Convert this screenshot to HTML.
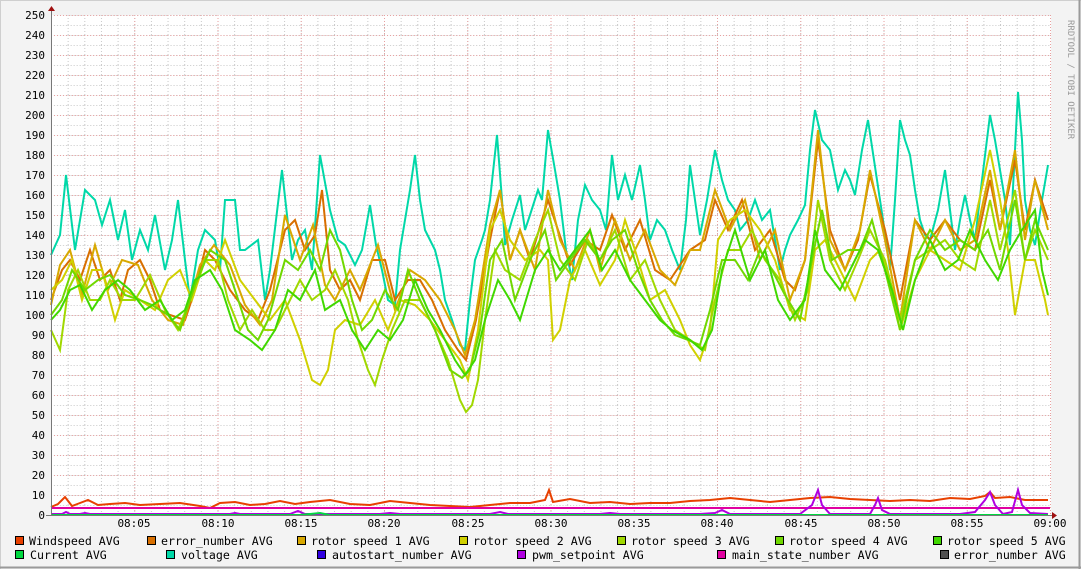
<!DOCTYPE html>
<html><head><meta charset="utf-8"><style>
html,body{margin:0;padding:0;background:#f3f3f3}
svg{display:block}
text{font-family:"DejaVu Sans Mono","Liberation Mono",monospace;font-size:11px;fill:#000}
.lg text{font-size:11.6px}
</style></head><body>
<svg width="1081" height="569" viewBox="0 0 1081 569" xmlns="http://www.w3.org/2000/svg">
<defs>
<pattern id="minor" x="51" y="15" width="16.65" height="10" patternUnits="userSpaceOnUse">
<line x1="0.5" y1="0" x2="0.5" y2="10" stroke="#c8c8c8" stroke-width="1" stroke-dasharray="1,2"/>
<line x1="0" y1="0.5" x2="16.65" y2="0.5" stroke="#c8c8c8" stroke-width="1" stroke-dasharray="1,2"/>
</pattern>
<pattern id="major" x="51" y="15" width="83.25" height="20" patternUnits="userSpaceOnUse">
<line x1="0.5" y1="0" x2="0.5" y2="20" stroke="#e8a0a0" stroke-width="1" stroke-dasharray="1,2"/>
<line x1="0" y1="0.5" x2="83.25" y2="0.5" stroke="#e8a0a0" stroke-width="1" stroke-dasharray="1,2"/>
</pattern>
</defs>
<rect x="0" y="0" width="1081" height="569" fill="#f3f3f3"/>
<line x1="0" y1="0.5" x2="1081" y2="0.5" stroke="#cfcfcf"/>
<line x1="0.5" y1="0" x2="0.5" y2="569" stroke="#cfcfcf"/>
<line x1="0" y1="567.5" x2="1081" y2="567.5" stroke="#9a9a9a" stroke-width="2"/>
<line x1="1079.5" y1="0" x2="1079.5" y2="569" stroke="#9a9a9a" stroke-width="2"/>
<rect x="51" y="15" width="1000" height="500" fill="#fff"/>
<rect x="52" y="15" width="998" height="500" fill="url(#minor)"/>
<rect x="52" y="15" width="999" height="500" fill="url(#major)"/>
<g text-anchor="end">
<text x="45" y="19">250</text><text x="45" y="39">240</text><text x="45" y="59">230</text><text x="45" y="79">220</text><text x="45" y="99">210</text><text x="45" y="119">200</text><text x="45" y="139">190</text><text x="45" y="159">180</text><text x="45" y="179">170</text><text x="45" y="199">160</text><text x="45" y="219">150</text><text x="45" y="239">140</text><text x="45" y="259">130</text><text x="45" y="279">120</text><text x="45" y="299">110</text><text x="45" y="319">100</text><text x="45" y="339">90</text><text x="45" y="359">80</text><text x="45" y="379">70</text><text x="45" y="399">60</text><text x="45" y="419">50</text><text x="45" y="439">40</text><text x="45" y="459">30</text><text x="45" y="479">20</text><text x="45" y="499">10</text><text x="45" y="519">0</text>
</g>
<g text-anchor="middle">
<text x="134" y="527">08:05</text><text x="218" y="527">08:10</text><text x="301" y="527">08:15</text><text x="384" y="527">08:20</text><text x="468" y="527">08:25</text><text x="551" y="527">08:30</text><text x="634" y="527">08:35</text><text x="717" y="527">08:40</text><text x="801" y="527">08:45</text><text x="884" y="527">08:50</text><text x="967" y="527">08:55</text><text x="1050" y="527">09:00</text>
</g>
<text transform="translate(1068,20) rotate(90)" style="font-size:9px;fill:#999">RRDTOOL / TOBI OETIKER</text>
<g fill="none" stroke-width="2" stroke-linejoin="miter">
<polyline stroke="#00d8a8" points="51,255 60,235 66,175 75,250 85,190 95,200 102,225 110,200 118,240 125,210 132,260 140,230 148,250 155,215 165,270 172,240 178,200 185,260 190,300 198,250 205,230 215,240 220,270 225,200 235,200 240,250 245,250 258,240 265,300 270,270 282,170 292,260 298,240 305,230 312,270 320,155 330,210 338,240 345,245 355,265 362,250 370,205 376,245 382,270 388,300 395,305 400,250 405,220 410,190 415,155 420,200 425,230 435,250 440,270 445,300 452,320 460,345 465,350 470,300 475,260 482,240 485,230 490,200 497,135 502,200 505,245 512,220 520,195 525,230 530,215 538,190 542,200 548,130 555,170 560,200 566,250 572,280 578,220 585,185 592,200 600,210 606,230 612,155 618,200 625,175 632,200 640,165 645,200 650,240 657,220 665,230 672,250 680,270 686,220 690,165 695,200 700,235 707,200 715,150 722,180 728,200 735,210 740,230 748,220 755,200 762,220 770,210 775,240 780,270 785,250 790,235 798,220 805,205 810,150 815,110 822,140 830,150 838,190 845,170 850,180 855,195 862,150 868,120 874,160 880,200 886,240 890,270 895,200 900,120 905,140 910,155 915,190 920,220 925,235 930,240 938,210 945,170 950,210 955,250 960,220 965,195 970,220 975,240 982,180 990,115 995,140 1000,170 1005,200 1010,245 1015,150 1018,92 1022,140 1025,200 1030,230 1035,245 1042,200 1048,165"/>
<polyline stroke="#d86f00" points="51,300 62,270 70,260 80,280 90,250 100,280 110,270 120,300 128,270 140,260 150,280 160,310 170,315 185,320 195,290 205,250 215,260 230,290 245,310 258,320 270,290 285,230 295,220 305,250 315,235 322,190 330,270 340,290 350,280 360,300 372,260 385,260 395,300 408,280 420,280 432,300 445,330 458,350 466,360 476,320 490,240 500,190 510,260 520,230 530,260 548,200 558,230 570,265 585,240 600,250 612,215 625,250 640,220 655,270 670,280 690,250 705,240 715,200 728,230 742,200 755,250 770,230 785,280 795,290 805,260 818,140 830,230 845,270 858,240 870,175 885,230 900,300 915,220 930,240 945,220 960,240 975,250 990,180 1000,230 1015,160 1025,230 1035,180 1048,220"/>
<polyline stroke="#d8a800" points="51,305 60,265 70,250 82,295 95,245 108,290 122,260 138,265 152,300 168,320 183,325 200,265 214,245 230,265 245,305 260,325 272,300 285,215 300,260 313,225 325,285 335,300 350,270 360,290 378,245 395,310 410,270 425,280 440,300 455,330 465,355 475,320 490,225 500,190 510,260 520,230 535,270 548,190 560,240 575,270 590,230 600,270 615,220 630,260 645,230 660,270 675,285 690,250 700,250 715,190 730,230 745,200 760,260 775,230 790,300 805,260 818,130 830,240 845,270 860,230 870,170 885,240 900,320 915,220 930,250 945,220 960,250 975,240 990,170 1000,230 1015,150 1025,240 1035,180 1048,230"/>
<polyline stroke="#d0d000" points="51,290 62,280 72,260 82,300 92,270 102,270 115,320 125,290 140,300 155,310 168,280 180,270 192,300 205,260 215,270 225,240 240,280 255,300 270,320 285,300 300,340 312,380 320,385 328,370 335,330 345,320 360,325 375,300 388,330 400,300 415,305 430,320 445,340 460,360 468,380 478,330 490,230 500,210 510,240 525,260 540,250 548,260 553,340 560,330 570,280 585,250 600,285 615,260 625,220 635,250 650,300 665,290 680,320 690,345 700,360 710,330 718,240 730,220 745,210 760,230 775,260 790,310 805,320 815,250 825,240 840,270 855,300 870,260 880,250 890,280 900,330 915,280 930,250 945,260 960,270 975,220 990,150 1000,200 1008,250 1015,315 1025,260 1035,260 1045,300 1048,315"/>
<polyline stroke="#a0d800" points="51,330 60,350 68,290 78,270 90,300 100,300 110,280 122,300 135,300 150,275 165,310 178,330 190,300 205,260 218,260 228,300 240,330 252,310 265,330 275,330 290,300 300,280 312,300 325,290 335,270 348,300 358,340 368,370 375,385 382,360 392,330 405,300 420,300 435,330 448,360 460,400 466,412 472,405 478,380 485,320 495,250 505,270 520,280 535,240 548,210 560,260 575,280 588,240 600,260 615,230 630,280 645,260 660,300 675,330 690,340 705,350 715,300 728,250 740,250 752,230 765,260 780,280 795,320 808,290 818,200 830,260 845,290 858,260 870,230 885,260 900,320 915,260 930,250 945,240 960,260 975,270 990,200 1000,250 1015,190 1025,260 1035,230 1048,260"/>
<polyline stroke="#70d800" points="51,315 62,300 72,270 85,290 98,280 110,275 125,295 140,300 152,305 168,315 180,330 195,285 210,250 225,260 235,290 248,330 258,340 268,320 285,260 298,270 310,250 320,270 330,230 340,250 352,300 362,330 372,320 385,290 398,310 408,270 420,300 435,330 450,370 462,378 470,370 480,330 490,260 502,240 515,300 530,260 545,230 556,280 570,260 585,240 600,260 612,240 625,230 638,270 650,300 662,320 675,335 688,340 700,345 710,310 722,260 735,260 748,280 760,250 772,270 785,295 800,320 812,260 822,210 832,260 848,250 860,250 872,220 885,270 900,330 915,260 930,230 945,250 960,240 975,250 988,230 1000,270 1015,200 1025,260 1035,220 1048,250"/>
<polyline stroke="#40d800" points="51,320 60,310 70,290 80,285 92,310 105,290 118,280 130,290 145,310 160,300 172,320 185,310 195,280 210,270 222,290 235,330 250,340 262,350 275,330 288,290 300,300 315,270 325,310 340,300 352,330 365,350 378,330 390,340 403,320 415,280 428,310 440,330 455,360 465,375 475,360 485,320 498,280 510,300 520,320 535,270 548,250 560,270 575,250 590,230 602,270 615,250 630,280 645,300 660,320 672,330 690,340 702,350 712,330 722,270 735,230 750,280 765,250 778,300 790,320 805,300 815,230 825,270 840,290 855,260 865,240 878,250 892,290 903,330 915,280 930,240 945,270 958,260 970,230 985,260 998,280 1010,250 1022,230 1035,210 1042,270 1048,295"/>
<polyline stroke="#e84000" points="51,507 58,504 65,497 72,506 80,503 88,500 98,505 110,504 125,503 140,505 160,504 180,503 200,506 210,508 220,503 235,502 250,505 265,504 280,501 295,504 310,502 330,500 350,504 370,505 390,501 410,503 430,505 450,506 470,507 490,505 510,503 530,503 545,500 549,490 553,502 570,499 590,503 610,502 630,504 650,503 670,503 690,501 710,500 730,498 750,500 770,502 790,500 810,498 830,497 850,499 870,500 890,501 910,500 930,501 950,498 970,499 985,496 990,492 995,498 1010,497 1025,500 1048,500"/>
<line x1="51" y1="508" x2="1050" y2="508" stroke="#e000a0"/>
<polyline stroke="#b000e0" points="51,514 62,514 66,512 70,514 80,514 85,513 90,514 230,514 235,513 240,514 290,514 298,511 305,514 380,514 390,513 400,514 490,514 500,512 508,514 600,514 610,513 620,514 700,514 715,513 722,510 730,514 800,514 812,505 818,490 822,505 830,514 870,514 875,505 878,498 882,510 890,514 960,514 975,512 985,500 990,492 995,505 1003,514 1012,512 1018,490 1022,505 1030,513 1048,514"/>
<polyline stroke="#00d840" points="51,515 300,515 320,513 330,515 1048,515"/>
</g>
<line x1="51.5" y1="10" x2="51.5" y2="516" stroke="#777" stroke-width="1"/>
<line x1="46" y1="515.5" x2="1054" y2="515.5" stroke="#777" stroke-width="1"/>
<polygon points="48,11 55,11 51.5,6" fill="#a01010"/>
<polygon points="1052,512 1052,519 1057,515.5" fill="#a01010"/>
<g stroke="#000" stroke-width="1">
<rect x="15.5" y="536.5" width="8" height="8" fill="#e84000"/>
<rect x="147.5" y="536.5" width="8" height="8" fill="#d86f00"/>
<rect x="297.5" y="536.5" width="8" height="8" fill="#d8a800"/>
<rect x="459.5" y="536.5" width="8" height="8" fill="#d0d000"/>
<rect x="617.5" y="536.5" width="8" height="8" fill="#a0d800"/>
<rect x="775.5" y="536.5" width="8" height="8" fill="#70d800"/>
<rect x="933.5" y="536.5" width="8" height="8" fill="#40d800"/>
<rect x="15.5" y="550.5" width="8" height="8" fill="#00d840"/>
<rect x="166.5" y="550.5" width="8" height="8" fill="#00d8a8"/>
<rect x="317.5" y="550.5" width="8" height="8" fill="#3000e0"/>
<rect x="517.5" y="550.5" width="8" height="8" fill="#b000e0"/>
<rect x="717.5" y="550.5" width="8" height="8" fill="#e000a0"/>
<rect x="940.5" y="550.5" width="8" height="8" fill="#505050"/>
</g>
<g class="lg">
<text x="29" y="545">Windspeed AVG</text>
<text x="161" y="545">error_number AVG</text>
<text x="311" y="545">rotor speed 1 AVG</text>
<text x="473" y="545">rotor speed 2 AVG</text>
<text x="631" y="545">rotor speed 3 AVG</text>
<text x="789" y="545">rotor speed 4 AVG</text>
<text x="947" y="545">rotor speed 5 AVG</text>
<text x="30" y="559">Current AVG</text>
<text x="181" y="559">voltage AVG</text>
<text x="332" y="559">autostart_number AVG</text>
<text x="532" y="559">pwm_setpoint AVG</text>
<text x="732" y="559">main_state_number AVG</text>
<text x="954" y="559">error_number AVG</text>
</g>
</svg>
</body></html>
